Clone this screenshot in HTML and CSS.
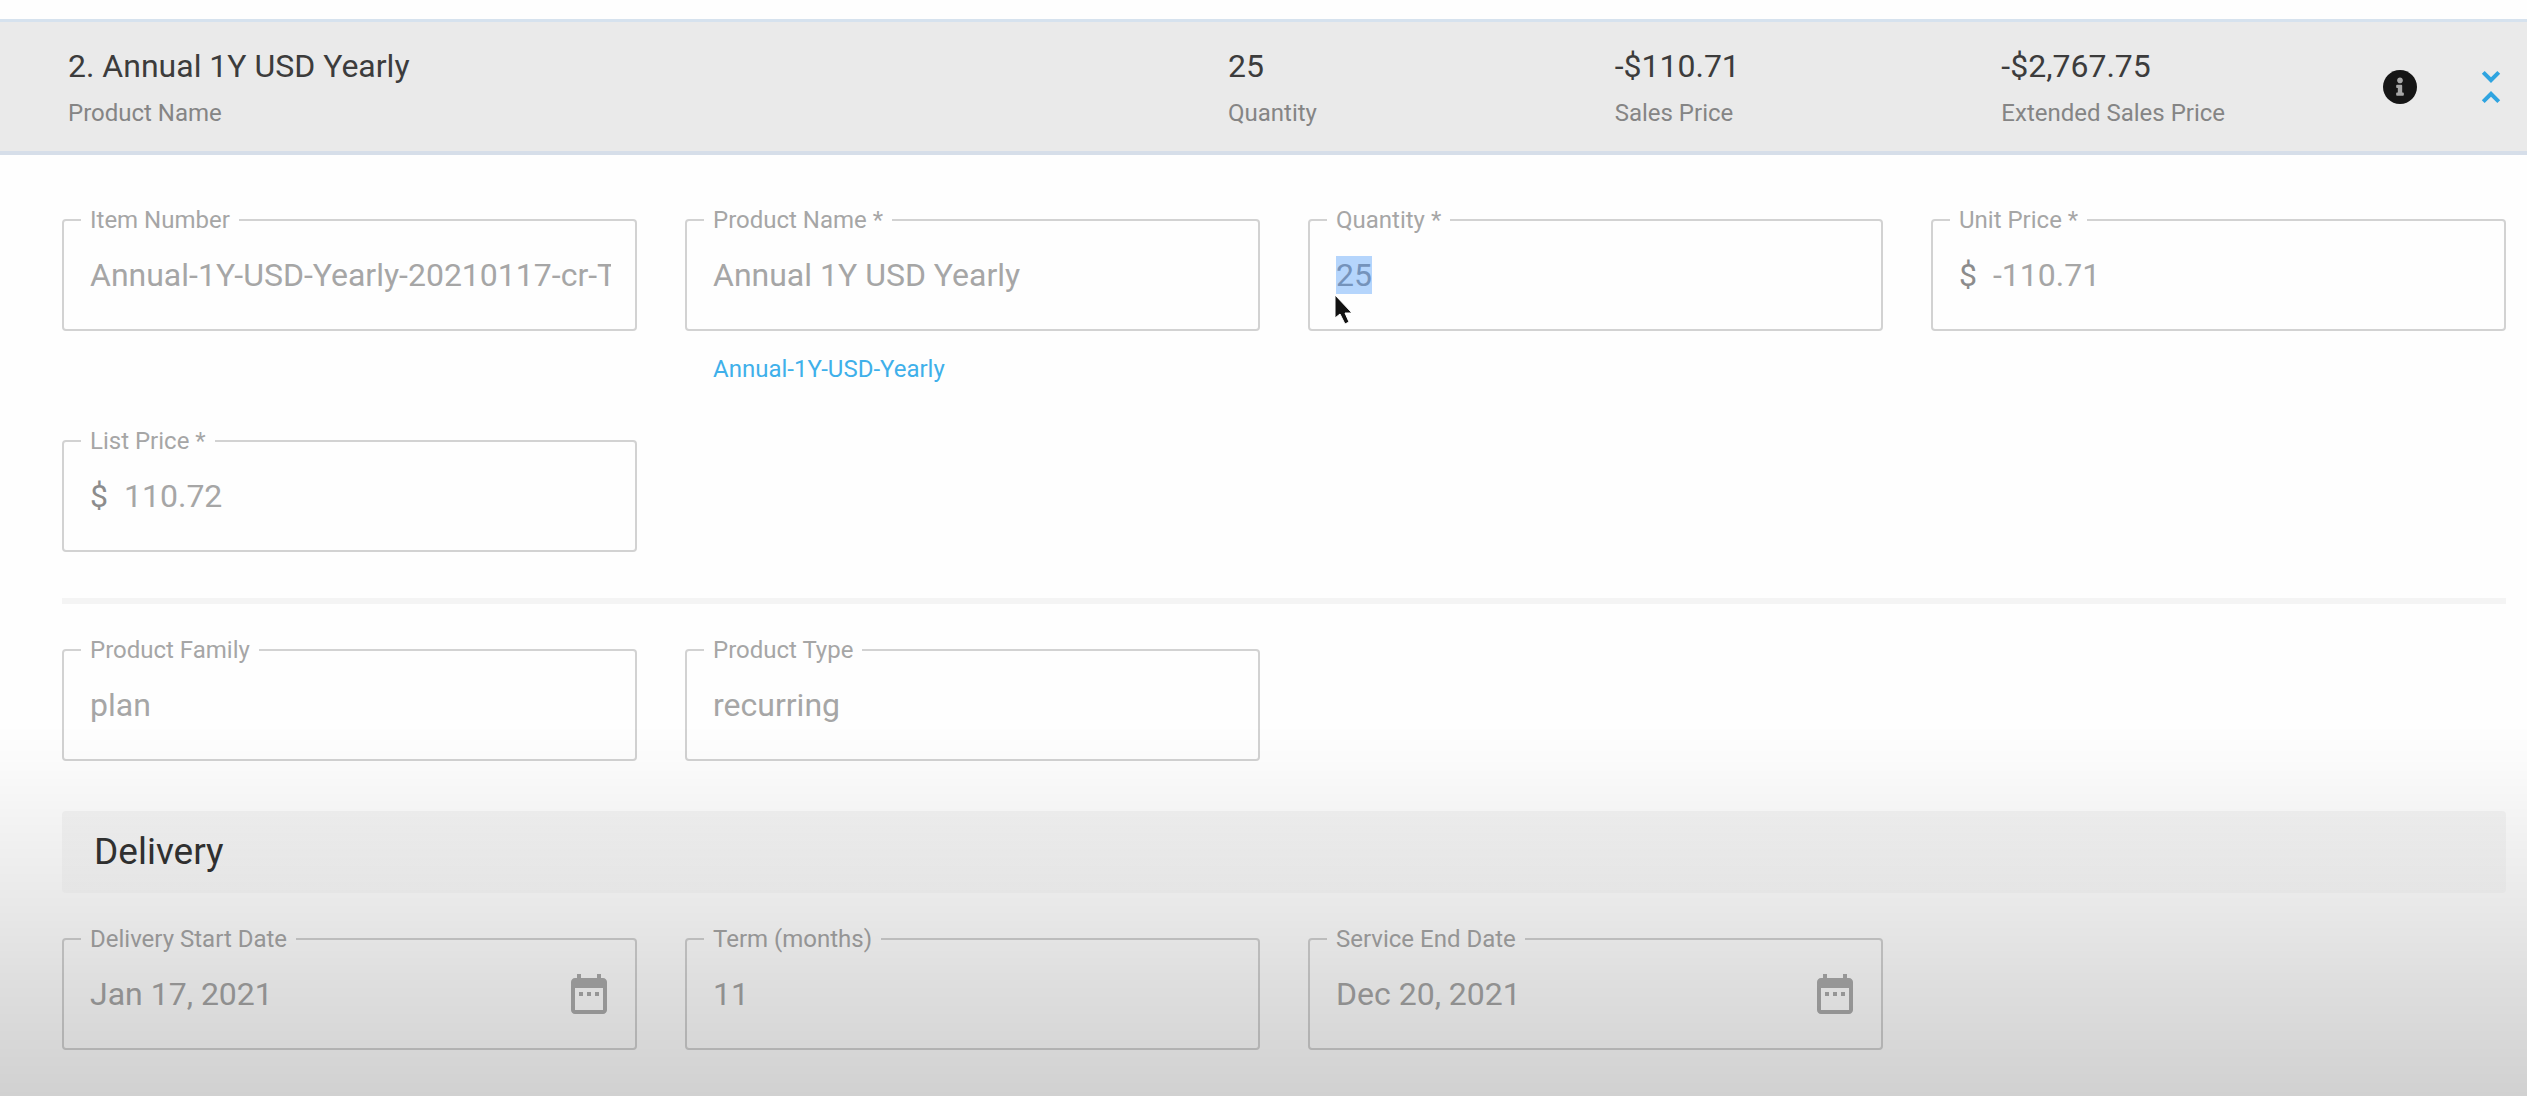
FILE: index.html
```html
<!DOCTYPE html>
<html lang="en">
<head>
<meta charset="utf-8">
<meta name="viewport" content="width=device-width, initial-scale=1">
<title>Annual 1Y USD Yearly</title>
<link rel="stylesheet" href="styles.css">
</head>
<body>
<main class="line-item">
  <header class="summary">
    <div class="summary-cell"><span class="summary-value">2. Annual 1Y USD Yearly</span><span class="summary-label">Product Name</span></div>
    <div class="summary-cell"><span class="summary-value">25</span><span class="summary-label">Quantity</span></div>
    <div class="summary-cell"><span class="summary-value">-$110.71</span><span class="summary-label">Sales Price</span></div>
    <div class="summary-cell"><span class="summary-value">-$2,767.75</span><span class="summary-label">Extended Sales Price</span></div>
    <div class="summary-actions">
      <button class="icon-button info" type="button" aria-label="Item information">
        <svg width="34" height="34" viewBox="8 8 496 496"><path fill="currentColor" d="M256 8C119.043 8 8 119.083 8 256c0 136.997 111.043 248 248 248s248-111.003 248-248C504 119.083 392.957 8 256 8z"/><path fill="#a8a8a8" d="M256 118c23.196 0 42 18.804 42 42s-18.804 42-42 42-42-18.804-42-42 18.804-42 42-42zm56 254c0 6.627-5.373 12-12 12h-88c-6.627 0-12-5.373-12-12v-24c0-6.627 5.373-12 12-12h12v-64h-12c-6.627 0-12-5.373-12-12v-24c0-6.627 5.373-12 12-12h64c6.627 0 12 5.373 12 12v100h12c6.627 0 12 5.373 12 12v24z"/></svg>
      </button>
      <button class="icon-button collapse" type="button" aria-label="Collapse item">
        <svg width="48" height="48" viewBox="0 0 24 24"><path fill="currentColor" d="M7.41 18.59L8.83 20 12 16.83 15.17 20l1.41-1.41L12 14l-4.59 4.59zm9.18-13.18L15.17 4 12 7.17 8.83 4 7.41 5.41 12 10l4.59-4.59z"/></svg>
      </button>
    </div>
  </header>

  <form class="details">
    <div class="field-grid">
      <fieldset class="field">
        <legend><label for="item-number">Item Number</label></legend>
        <input id="item-number" type="text" value="Annual-1Y-USD-Yearly-20210117-cr-T" readonly>
      </fieldset>
      <div class="field-group">
        <fieldset class="field">
          <legend><label for="product-name">Product Name *</label></legend>
          <input id="product-name" type="text" value="Annual 1Y USD Yearly" readonly>
        </fieldset>
        <a class="field-link" href="#">Annual-1Y-USD-Yearly</a>
      </div>
      <fieldset class="field">
        <legend><label for="quantity">Quantity *</label></legend>
        <input id="quantity" type="text" value="25" readonly>
        <svg class="pointer" width="20" height="32" viewBox="0 0 20 32" aria-hidden="true"><path fill="#111" stroke="#fff" stroke-width="1" d="M1 1v23l5-4 5 10 4-2-4-9h7z"/></svg>
      </fieldset>
      <fieldset class="field">
        <legend><label for="unit-price">Unit Price *</label></legend>
        <span class="prefix">$</span>
        <input id="unit-price" type="text" value="-110.71" readonly>
      </fieldset>
      <fieldset class="field">
        <legend><label for="list-price">List Price *</label></legend>
        <span class="prefix">$</span>
        <input id="list-price" type="text" value="110.72" readonly>
      </fieldset>
    </div>

    <hr class="divider">

    <div class="field-grid">
      <fieldset class="field">
        <legend><label for="product-family">Product Family</label></legend>
        <input id="product-family" type="text" value="plan" readonly>
      </fieldset>
      <fieldset class="field">
        <legend><label for="product-type">Product Type</label></legend>
        <input id="product-type" type="text" value="recurring" readonly>
      </fieldset>
    </div>

    <h2 class="section-title">Delivery</h2>

    <div class="field-grid">
      <fieldset class="field">
        <legend><label for="start-date">Delivery Start Date</label></legend>
        <input id="start-date" type="text" value="Jan 17, 2021" readonly>
        <button class="icon-button calendar" type="button" aria-label="Choose start date">
          <svg width="48" height="48" viewBox="0 0 24 24"><path fill="currentColor" d="M9 11H7v2h2v-2zm4 0h-2v2h2v-2zm4 0h-2v2h2v-2zm2-7h-1V2h-2v2H8V2H6v2H5c-1.11 0-1.99.9-1.99 2L3 20c0 1.1.89 2 2 2h14c1.1 0 2-.9 2-2V6c0-1.1-.9-2-2-2zm0 16H5V9h14v11z"/></svg>
        </button>
      </fieldset>
      <fieldset class="field">
        <legend><label for="term">Term (months)</label></legend>
        <input id="term" type="text" value="11" readonly>
      </fieldset>
      <fieldset class="field">
        <legend><label for="end-date">Service End Date</label></legend>
        <input id="end-date" type="text" value="Dec 20, 2021" readonly>
        <button class="icon-button calendar" type="button" aria-label="Choose end date">
          <svg width="48" height="48" viewBox="0 0 24 24"><path fill="currentColor" d="M9 11H7v2h2v-2zm4 0h-2v2h2v-2zm4 0h-2v2h2v-2zm2-7h-1V2h-2v2H8V2H6v2H5c-1.11 0-1.99.9-1.99 2L3 20c0 1.1.89 2 2 2h14c1.1 0 2-.9 2-2V6c0-1.1-.9-2-2-2zm0 16H5V9h14v11z"/></svg>
        </button>
      </fieldset>
    </div>
  </form>
</main>
<div class="bottom-shade"></div>
<script src="script.js"></script>
</body>
</html>
```
FILE: styles.css
```css
* {
  box-sizing: border-box;
}

body {
  margin: 0;
  background: #fefefe;
  color: #3c3c3c;
  font-family: Roboto, "Liberation Sans", sans-serif;
  font-size: 32px;
  line-height: 38px;
}

.line-item {
  padding-top: 19px;
}

.summary {
  display: grid;
  grid-template-columns: 3fr 1fr 1fr 1fr 139px;
  align-items: center;
  padding: 25px 0 24px 68px;
  border-top: 3px solid #d6e2ee;
  border-bottom: 4px solid #d6dee9;
  background: #eaeaea;
}

.summary-cell {
  display: flex;
  flex-direction: column;
  gap: 14px;
}

.summary-label {
  color: #858585;
  font-size: 24px;
  line-height: 28px;
}

.summary-actions {
  display: flex;
  align-items: center;
  justify-content: space-between;
}

.icon-button {
  display: flex;
  flex: none;
  align-items: center;
  justify-content: center;
  width: 48px;
  height: 48px;
  padding: 0;
  border: 0;
  background: none;
}

.info {
  width: 24px;
  color: #161616;
}

.info svg {
  flex: none;
}

.collapse {
  margin-right: 12px;
  color: #2fa4e0;
}

.details {
  padding: 51px 21px 46px 62px;
}

.field-grid {
  display: grid;
  grid-template-columns: repeat(4, minmax(0, 1fr));
  align-items: start;
  gap: 44px 48px;
}

.field {
  position: relative;
  display: flex;
  min-width: 0;
  margin: 0;
  padding: 0 24px 0 26px;
  border: 2px solid #d2d2d2;
  border-radius: 4px;
}

.field legend {
  margin-left: -9px;
  padding: 0 9px;
  color: #a6a6a6;
  font-size: 24px;
  line-height: 28px;
}

.field input {
  flex: 1;
  width: 100%;
  min-width: 0;
  height: 95px;
  padding: 22px 0 35px;
  border: 0;
  outline: 0;
  background: none;
  color: #a6a6a6;
  font: inherit;
}

.field input::selection {
  background: #b5d5fc;
  color: #7593bb;
}

.prefix {
  padding: 22px 16px 0 0;
  color: #8c8c8c;
}

.calendar {
  margin: 17px -2px 0 0;
  color: #acacac;
}

.field-link {
  display: block;
  margin: 24px 28px 0;
  color: #3fb0ea;
  font-size: 24px;
  line-height: 28px;
  text-decoration: none;
}

.pointer {
  position: absolute;
  top: 60px;
  left: 24px;
}

.divider {
  height: 6px;
  margin: 46px 0 32px;
  border: 0;
  background: #f4f4f4;
}

.section-title {
  margin: 50px 0 32px;
  padding: 20px 32px;
  border-radius: 4px;
  background: linear-gradient(#f5f5f5, #f9f9f9);
  color: #333;
  font-size: 37px;
  font-weight: 400;
  line-height: 42px;
}

/* Darkens the lower third of the window */
.bottom-shade {
  position: fixed;
  right: 0;
  bottom: 0;
  left: 0;
  height: 34vh;
  background: linear-gradient(rgba(0, 0, 0, 0), rgba(0, 0, 0, .015) 12%, rgba(0, 0, 0, .04) 24%, rgba(0, 0, 0, .08) 46%, rgba(0, 0, 0, .125) 70%, rgba(0, 0, 0, .175));
  pointer-events: none;
}
```
FILE: script.js
```js
const quantity = document.getElementById("quantity");
quantity.focus();
quantity.select();
```
